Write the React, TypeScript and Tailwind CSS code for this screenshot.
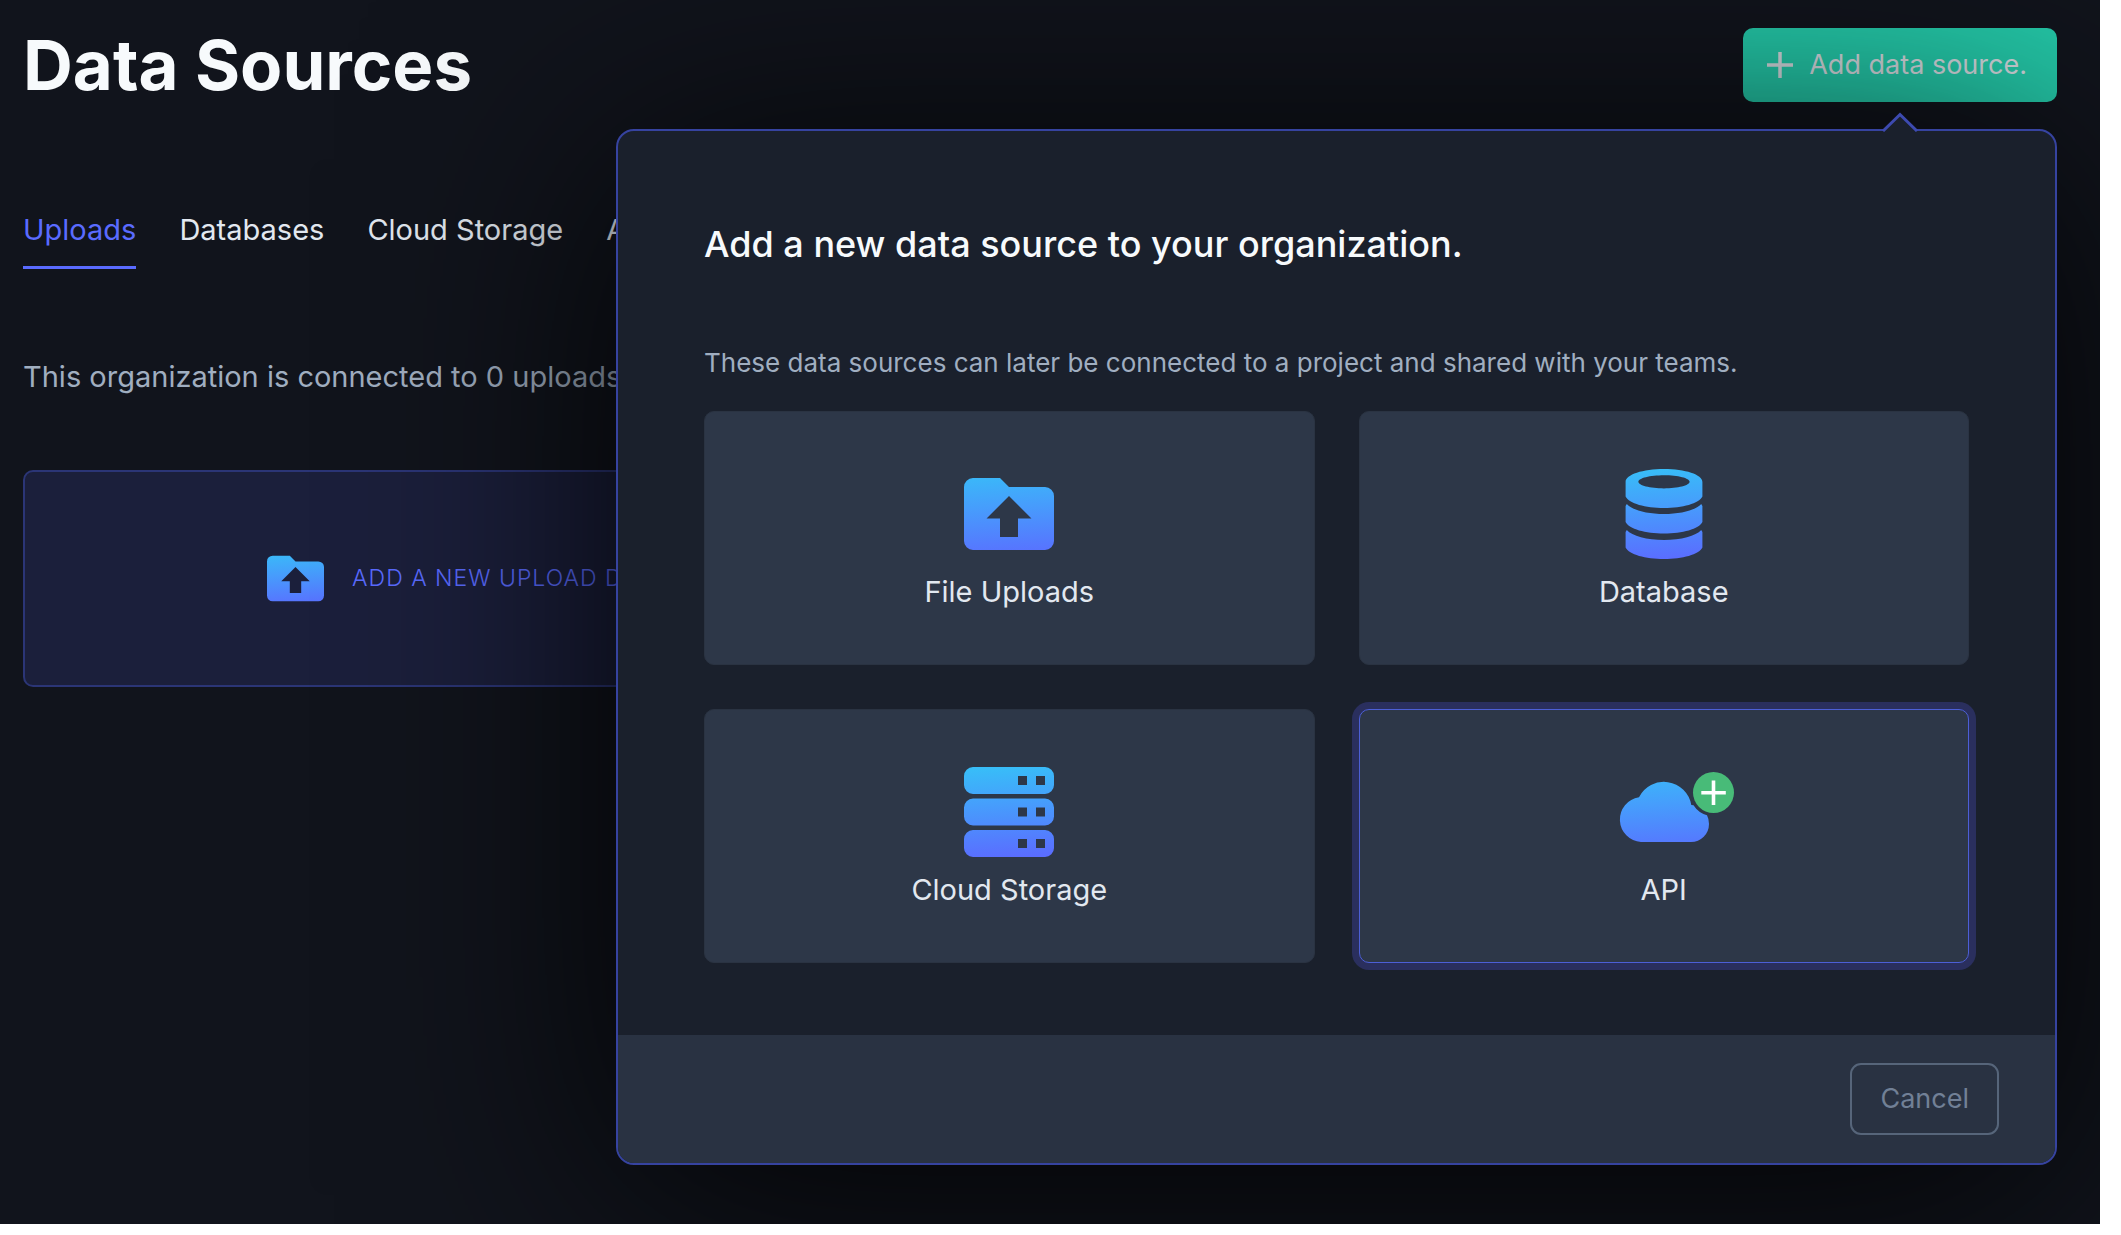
import React from "react";

type IconProps = { className?: string };

function Fade({ id }: { id: string }) {
  return (
    <defs>
      <linearGradient id={id} gradientUnits="userSpaceOnUse" x1="42" y1="0" x2="48" y2="90">
        <stop offset="0" stopColor="#38bdf8" />
        <stop offset="0.4" stopColor="#469efc" />
        <stop offset="1" stopColor="#5a6dff" />
      </linearGradient>
    </defs>
  );
}

function FolderUploadIcon({ id, className }: IconProps & { id: string }) {
  return (
    <svg viewBox="0 0 90 90" className={className} aria-hidden="true">
      <Fade id={id} />
      <path
        fill={`url(#${id})`}
        fillRule="evenodd"
        d="M9 9h27l9 9h36a9 9 0 0 1 9 9v45a9 9 0 0 1-9 9H9a9 9 0 0 1-9-9V18a9 9 0 0 1 9-9zM45 27 22.500 49.500H36V68h18V49.500h13.500z"
      />
    </svg>
  );
}

function DatabaseIcon({ className }: IconProps) {
  return (
    <svg viewBox="0 0 90 90" className={className} aria-hidden="true">
      <Fade id="fade-database" />
      <g fill="url(#fade-database)">
        <path
          fillRule="evenodd"
          d="M6.600 13C6.600 5.500 24 0 45 0s38.400 5.500 38.400 13v14.500C80 34.500 63.500 39 45 39S10 34.500 6.600 27.500zM45 6.300c-14 0-25.600 2.900-25.600 6.500S31 19.400 45 19.400s25.600-3 25.600-6.600S59 6.300 45 6.300z"
        />
        <path d="M7.800 35C13 41 28 45 45 45s32-4 37.200-10l1.200 2v16C80 60 63.500 64.500 45 64.500S10 60 6.600 53V37z" />
        <path d="M7.800 61C13 67 28 71 45 71s32-4 37.200-10l1.200 2v15.500C80 85.500 63.500 90 45 90S10 85.500 6.600 78.500V63z" />
      </g>
    </svg>
  );
}

function ServerIcon({ className }: IconProps) {
  return (
    <svg viewBox="0 0 90 90" className={className} aria-hidden="true">
      <Fade id="fade-server" />
      <path
        fill="url(#fade-server)"
        fillRule="evenodd"
        d="M9 0h72a9 9 0 0 1 9 9v9a9 9 0 0 1-9 9H9a9 9 0 0 1-9-9V9a9 9 0 0 1 9-9zM54 9v9h9V9zM72 9v9h9V9z
           M9 31.500h72a9 9 0 0 1 9 9v9a9 9 0 0 1-9 9H9a9 9 0 0 1-9-9v-9a9 9 0 0 1 9-9zM54 40.500v9h9v-9zM72 40.500v9h9v-9z
           M9 63h72a9 9 0 0 1 9 9v9a9 9 0 0 1-9 9H9a9 9 0 0 1-9-9v-9a9 9 0 0 1 9-9zM54 72v9h9v-9zM72 72v9h9v-9z"
      />
    </svg>
  );
}

function CloudApiIcon({ className }: IconProps) {
  return (
    <svg viewBox="0 0 90 90" className={`overflow-visible ${className ?? ""}`} aria-hidden="true">
      <Fade id="fade-cloud" />
      <path
        fill="url(#fade-cloud)"
        d="M22 75A22.500 22.500 0 0 1 20 30.300A27.800 27.800 0 0 1 72.300 38L74.500 38.200A23.500 23.500 0 0 0 88 48.200Q90 52 90 57A18 18 0 0 1 72 75z"
      />
      <circle cx="94.500" cy="25.500" r="20.500" fill="#48bb78" />
      <path d="M94.500 13.500v24.500M82.300 25.800h24.500" stroke="#fff" strokeWidth="3.600" />
    </svg>
  );
}

const tabs = ["Uploads", "Databases", "Cloud Storage", "API"];

const sources = [
  { name: "File Uploads", icon: <FolderUploadIcon id="fade-folder" className="size-[90px]" />, active: false },
  { name: "Database", icon: <DatabaseIcon className="size-[90px]" />, active: false },
  { name: "Cloud Storage", icon: <ServerIcon className="size-[90px]" />, active: false },
  { name: "API", icon: <CloudApiIcon className="size-[90px]" />, active: true },
];

function AddSourceDialog() {
  return (
    <section
      role="dialog"
      aria-labelledby="dialog-title"
      className="absolute top-full right-0 z-10 mt-[27px] w-[1441px] max-w-full rounded-[18px] border-2 border-[#3643a0] bg-[#1a202c] shadow-[0_30px_290px_rgba(0,0,0,0.9)]"
    >
      <svg viewBox="0 0 36 20" className="absolute right-[137px] bottom-full -mb-px h-5 w-9" aria-hidden="true">
        <path d="M0 20 18 2l18 18z" fill="#1a202c" />
        <path d="M1 19 18 2.500 35 19" fill="none" stroke="#3d4ab0" strokeWidth="3" />
      </svg>
      <div className="px-[86px] pt-[86px] pb-[72px]">
        <h2 id="dialog-title" className="text-[36px] leading-[54px] font-medium text-[#f7fafc]">
          Add a new data source to your organization.
        </h2>
        <p className="mt-[72px] text-[26px] leading-10 text-[#a0aec0]">
          These data sources can later be connected to a project and shared with your teams.
        </p>
        <div className="mt-7 grid grid-cols-2 gap-11">
          {sources.map((s) => (
            <button
              key={s.name}
              type="button"
              className={
                "flex flex-col items-center gap-3 rounded-[10px] border bg-[#2d3748] pt-[57px] pb-[51px] " +
                (s.active
                  ? "border-[#4c5fd6] shadow-[0_0_0_7px_#2a2f5e]"
                  : "border-[#2a3342]")
              }
            >
              {s.icon}
              <span className="text-[29px] leading-[42px] text-[#e2e8f0]">{s.name}</span>
            </button>
          ))}
        </div>
      </div>
      <footer className="flex justify-end rounded-b-[16px] bg-[#293242] px-14 py-7">
        <button
          type="button"
          className="rounded-[11px] border-2 border-[#56657a] px-7 py-[14px] text-[27px] leading-10 text-[#718096]"
        >
          Cancel
        </button>
      </footer>
    </section>
  );
}

export default function App() {
  return (
    <div className="flex min-h-screen bg-white pr-[21px] pb-[11px] font-['Inter',sans-serif]">
      <main className="flex-1 overflow-hidden bg-[#11141c] pt-7 pr-[43px] pl-[23px]">
        <header className="relative flex items-center justify-between">
          <h1 className="text-[69px] leading-[74px] font-bold text-[#f7fafc]">Data Sources</h1>
          <button
            type="button"
            className="flex items-center gap-4 rounded-[10px] bg-[#24c9a9] px-6 py-[17px] pr-[30px] text-[27px] leading-10 text-[#d6dbe0]"
          >
            <svg viewBox="0 0 26 26" className="size-[26px]" aria-hidden="true">
              <path d="M13 0v26M0 13h26" stroke="currentColor" strokeWidth="3.500" />
            </svg>
            Add data source.
          </button>
          <AddSourceDialog />
        </header>

        <nav className="mt-[107px] flex gap-[43px] text-[29px] leading-[42px]">
          {tabs.map((tab, i) => (
            <a
              key={tab}
              href="#"
              className={
                i === 0
                  ? "border-b-[3px] border-[#5a6bff] pb-[15px] text-[#5a6bff]"
                  : "border-b-[3px] border-transparent pb-[15px] text-[#e2e8f0]"
              }
            >
              {tab}
            </a>
          ))}
        </nav>

        <p className="mt-[87px] text-[29px] leading-[42px] text-[#a0aec0]">
          This organization is connected to 0 uploads.
        </p>

        <div className="mt-[72px] grid grid-cols-2 gap-11">
          <button
            type="button"
            className="flex items-center justify-center gap-7 rounded-[10px] border-2 border-[#2b3576] bg-[#1b1f3b] py-[78px] text-[23px] leading-[57px] font-light tracking-[1px] text-[#5a6bff] uppercase"
          >
            <FolderUploadIcon id="fade-folder-small" className="size-[57px]" />
            Add a new upload data source
          </button>
        </div>
      </main>
    </div>
  );
}
